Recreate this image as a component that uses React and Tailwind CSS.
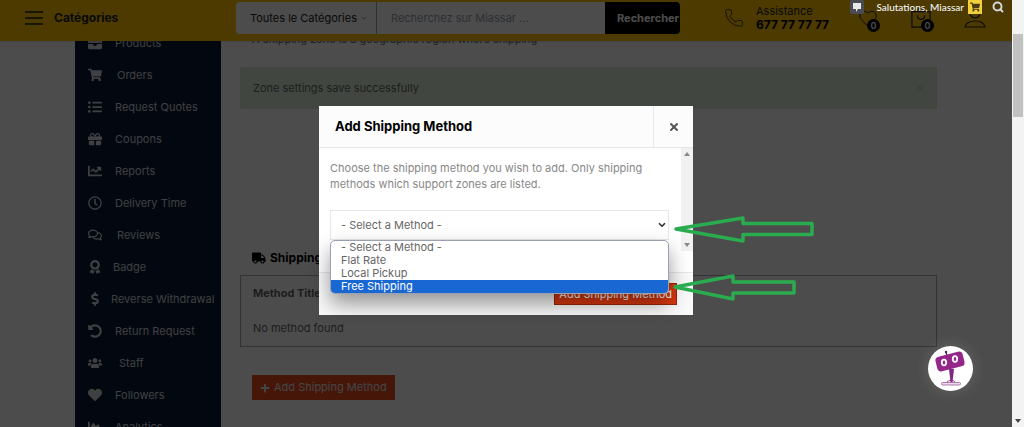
import React, { useState } from 'react';
import {
  FaBriefcase, FaShoppingCart, FaListUl, FaGift, FaChartLine, FaRegClock, FaRegComments,
  FaAward, FaDollarSign, FaUndoAlt, FaUsers, FaHeart, FaChartArea, FaTruck, FaPlus,
} from 'react-icons/fa';
import { ChevronDown, Heart, Phone, Search, X } from 'lucide-react';

const menuItems = [
  { label: 'Products', icon: FaBriefcase, gap: 'gap-3' },
  { label: 'Orders', icon: FaShoppingCart, gap: 'gap-3.5' },
  { label: 'Request Quotes', icon: FaListUl, gap: 'gap-3' },
  { label: 'Coupons', icon: FaGift, gap: 'gap-3' },
  { label: 'Reports', icon: FaChartLine, gap: 'gap-3' },
  { label: 'Delivery Time', icon: FaRegClock, gap: 'gap-3' },
  { label: 'Reviews', icon: FaRegComments, gap: 'gap-3.5' },
  { label: 'Badge', icon: FaAward, gap: 'gap-2.5' },
  { label: 'Reverse Withdrawal', icon: FaDollarSign, gap: 'gap-2' },
  { label: 'Return Request', icon: FaUndoAlt, gap: 'gap-3' },
  { label: 'Staff', icon: FaUsers, gap: 'gap-4' },
  { label: 'Followers', icon: FaHeart, gap: 'gap-3' },
  { label: 'Analytics', icon: FaChartArea, gap: 'gap-3' },
];

const methods = ['- Select a Method -', 'Flat Rate', 'Local Pickup', 'Free Shipping'];

function Badge() {
  return (
    <span className="absolute -right-0.5 -bottom-1 flex h-[13px] w-[13px] items-center justify-center rounded-full bg-black text-[9px] font-semibold leading-3 text-white">
      0
    </span>
  );
}

function Header() {
  return (
    <header className="absolute inset-x-0 top-0 flex h-[41px] items-start bg-[#ffc400] text-[#222] shadow">
      <button className="mt-2.5 ml-6 flex w-[212px] items-center gap-2.5 text-left text-xs font-bold">
        <svg viewBox="0 0 20 16" className="h-4 w-5" stroke="currentColor" strokeWidth="1.3">
          <path d="M1 2h18M1 8h18M1 14h18" />
        </svg>
        Catégories
      </button>
      <form className="mt-0.5 flex h-8 w-[444px] overflow-hidden rounded bg-white" onSubmit={(e) => e.preventDefault()}>
        <div className="relative w-[141px] border-r border-gray-400">
          <select aria-label="Catégorie" className="h-full w-full appearance-none pl-3.5 text-[11px]">
            <option>Toutes le Catégories</option>
          </select>
          <ChevronDown className="absolute top-3 right-2 h-2 w-2 text-gray-500" />
        </div>
        <input aria-label="Recherche" placeholder="Recherchez sur Miassar ..." className="min-w-0 flex-1 px-3.5 text-[11px] placeholder:text-gray-400" />
        <button className="w-[75px] bg-black pl-3 text-left text-[11px] font-bold text-white">Rechercher</button>
      </form>
      <Phone className="mt-2 ml-11 h-5 w-5" strokeWidth={1} />
      <div className="mt-1 ml-3">
        <p className="text-[11px] leading-[14px]">Assistance</p>
        <p className="text-[12px] font-bold leading-[14px] text-black">677 77 77 77</p>
      </div>
      <div className="mt-1.5 mr-6.5 ml-auto flex items-end gap-8">
        <a href="#wishlist" aria-label="Wishlist" className="relative block">
          <Heart className="h-5 w-5" strokeWidth={1.2} />
          <Badge />
        </a>
        <a href="#cart" aria-label="Panier" className="relative block">
          <svg viewBox="0 0 22 22" className="h-5 w-[22px]" fill="none" stroke="currentColor" strokeWidth="1.3">
            <path d="M1 4h20v17H1zM7 4c0-5 8-5 8 0M7 8c0 6 8 6 8 0" />
          </svg>
          <Badge />
        </a>
        <a href="#account" aria-label="Compte">
          <svg viewBox="0 0 22 22" className="h-[22px] w-[22px]" fill="none" stroke="currentColor" strokeWidth="1.2">
            <circle cx="11" cy="7" r="5" />
            <path d="M1 21c1-8 19-8 20 0z" />
          </svg>
        </a>
      </div>
    </header>
  );
}

function AdminBar() {
  return (
    <div className="absolute top-0 right-2 z-20 flex h-3.5 items-center font-[Lato,sans-serif] text-[10px] font-medium leading-[14px] text-gray-100">
      <svg viewBox="0 0 14 14" className="mr-3 h-3.5 w-3.5">
        <rect width="14" height="14" rx="2" fill="#4b4b55" />
        <path d="M3 3h8v6H8l-2 3V9H3z" fill="#e8e8e8" />
      </svg>
      <span>Salutations, Miassar</span>
      <span className="ml-1 flex h-3.5 w-3.5 items-center justify-center bg-[#f3cf3c]">
        <FaShoppingCart className="h-2.5 w-2.5 text-[#4a3c10]" />
      </span>
      <Search className="ml-2.5 h-3 w-3 text-gray-300" strokeWidth={4} />
    </div>
  );
}

function Sidebar() {
  return (
    <nav className="w-[146px] shrink-0 bg-[#0a1b36] pl-3 text-[11px] text-gray-300">
      {menuItems.map(({ label, icon: Icon, gap }) => (
        <a key={label} href="#menu" className={`flex h-8 items-center whitespace-nowrap ${gap}`}>
          <span className="flex w-4 justify-center">
            <Icon className="h-3.5 w-auto" />
          </span>
          {label}
        </a>
      ))}
    </nav>
  );
}

function ShippingZone() {
  return (
    <main className="min-w-0 flex-1 pr-[75px] pl-[19px] text-[11px] text-[#666]">
      <p className="pt-1 pl-3 leading-4 text-gray-500">A shipping zone is a geographic region where shipping</p>
      <div className="mt-5 flex h-[42px] items-center justify-between border border-[#d5e6d0] bg-[#dcebd9] px-3 text-[#666]">
        Zone settings save successfully
        <button aria-label="Fermer" className="text-[#a5b5a0]"><X className="h-2 w-2" /></button>
      </div>
      <h2 className="mt-[140px] flex h-[18px] items-center gap-1 pl-3 text-[12px] font-bold text-black">
        <FaTruck className="h-3.5 w-3.5" />
        Shipping Methods
      </h2>
      <table className="mt-2 w-full border border-[#aaa] text-left">
        <thead>
          <tr className="h-[35px]">
            <th className="pl-3 font-bold">Method Title</th>
          </tr>
        </thead>
        <tbody>
          <tr className="h-[36px]">
            <td className="pl-3">No method found</td>
          </tr>
        </tbody>
      </table>
      <button className="mt-7 ml-3 flex h-[25px] items-center gap-1 bg-[#ea4a20] px-2 text-gray-200">
        <FaPlus className="h-2.5 w-2.5" />
        Add Shipping Method
      </button>
    </main>
  );
}

function ShippingModal() {
  const [method, setMethod] = useState('Free Shipping');

  return (
    <div role="dialog" aria-label="Add Shipping Method" className="relative w-[374px] bg-white">
      <div className="flex h-[42px] items-center border-b border-gray-200 bg-[#fcfcfc]">
        <h1 className="flex-1 pl-4 text-[13px] font-bold text-black">Add Shipping Method</h1>
        <button aria-label="Close" className="flex h-full w-10 items-center justify-center border-l border-gray-200 text-[#555]">
          <X className="h-3 w-3" strokeWidth={4} />
        </button>
      </div>
      <div className="flex">
        <div className="flex-1 pt-3 pr-3 pb-8 pl-[11px]">
          <p className="text-[11px] leading-4 text-[#888]">
            Choose the shipping method you wish to add. Only shipping methods which support zones are listed.
          </p>
          <div className="relative mt-4.5">
            <select
              aria-label="Shipping method"
              className="block h-[30px] w-full appearance-none border border-gray-200 bg-white pl-2.5 text-[11px] text-[#666]"
            >
              <option>- Select a Method -</option>
            </select>
            <ChevronDown className="absolute top-2.5 right-0.5 h-2.5 w-2.5 text-[#333]" strokeWidth={4} />
            <ul className="absolute inset-x-0 top-[30px] z-10 overflow-hidden rounded-[5px] border border-gray-400 bg-white text-[11px] leading-[13px] text-[#666] shadow-[0_10px_20px_rgba(0,0,0,0.4)]">
              {methods.map((name) => (
                <li
                  key={name}
                  onClick={() => setMethod(name)}
                  className={name === method ? 'bg-[#1967d2] pl-2.5 text-white' : 'pl-2.5'}
                >
                  {name}
                </li>
              ))}
            </ul>
          </div>
        </div>
        <div className="flex h-[103px] w-[12px] flex-col items-center justify-between bg-[#f1f1f1] py-1 text-[#888]">
          <span className="border-x-[3px] border-b-4 border-x-transparent border-b-current" />
          <span className="border-x-[3px] border-t-4 border-x-transparent border-t-current" />
        </div>
      </div>
      <div className="flex justify-end border-t border-gray-200 bg-[#f9f9f9] py-2.5 pr-4">
        <button className="h-[22px] border border-[#9b2408] bg-[#d9370f] px-1 text-[11px] text-white">Add Shipping Method</button>
      </div>
    </div>
  );
}

function Arrows() {
  return (
    <svg viewBox="0 0 150 90" className="absolute top-[105px] left-[354px] z-20 h-[90px] w-[150px]" fill="none" stroke="#2bab50" strokeWidth="3.5" strokeLinejoin="round">
      <path d="M3 18L70 7v5.500H139v11H70V30z" />
      <path d="M2 76L60 65v6H121v11H60v6z" />
    </svg>
  );
}

function ChatBot() {
  return (
    <button aria-label="Chat" className="absolute right-[39px] bottom-9 z-20 h-[45px] w-[45px] rounded-full bg-white shadow-[0_0_16px_rgba(255,255,255,0.15)]">
      <svg viewBox="0 0 45 45" className="h-full w-full">
        <path d="M18 6l1 5" stroke="#3d2a45" strokeWidth="1.2" />
        <circle cx="18" cy="6" r="1.200" fill="#3d2a45" />
        <path d="M21 23h5l-1.500 13h-2z" fill="#7b2a80" />
        <rect x="8" y="8" width="28" height="15" rx="4" fill="#96278a" transform="rotate(-14 22 15.500)" />
        <ellipse cx="16" cy="16.500" rx="2.200" ry="2.800" fill="#96278a" stroke="#fff" strokeWidth="1.800" />
        <ellipse cx="27" cy="13" rx="2.200" ry="2.800" fill="#96278a" stroke="#fff" strokeWidth="1.800" />
        <path d="M19 36c1-2 7-2 8 0" fill="none" stroke="#96278a" />
        <rect x="13.500" y="36.500" width="19" height="2.500" rx="1" fill="#ecd6ea" stroke="#a0609b" strokeWidth="0.800" />
      </svg>
    </button>
  );
}

function App() {
  return (
    <div className="flex h-screen overflow-hidden bg-white font-[Inter,sans-serif]">
      <div className="relative min-w-0 flex-1 overflow-hidden">
        <div className="flex pt-[27px] pl-[75px]">
          <Sidebar />
          <ShippingZone />
        </div>
        <Header />
        <div className="absolute inset-0 z-10 flex items-center justify-center bg-black/70 pb-1.5">
          <div className="relative">
            <ShippingModal />
            <Arrows />
          </div>
        </div>
        <AdminBar />
        <ChatBot />
      </div>
      <div className="flex w-3 shrink-0 flex-col items-center justify-between bg-[#f3f3f3] pt-[34px] pb-1">
        <div className="h-[83px] w-2.5 bg-[#c1c1c1]" />
        <span className="border-x-[3px] border-t-4 border-x-transparent border-t-[#444]" />
      </div>
    </div>
  );
}

export default App;
